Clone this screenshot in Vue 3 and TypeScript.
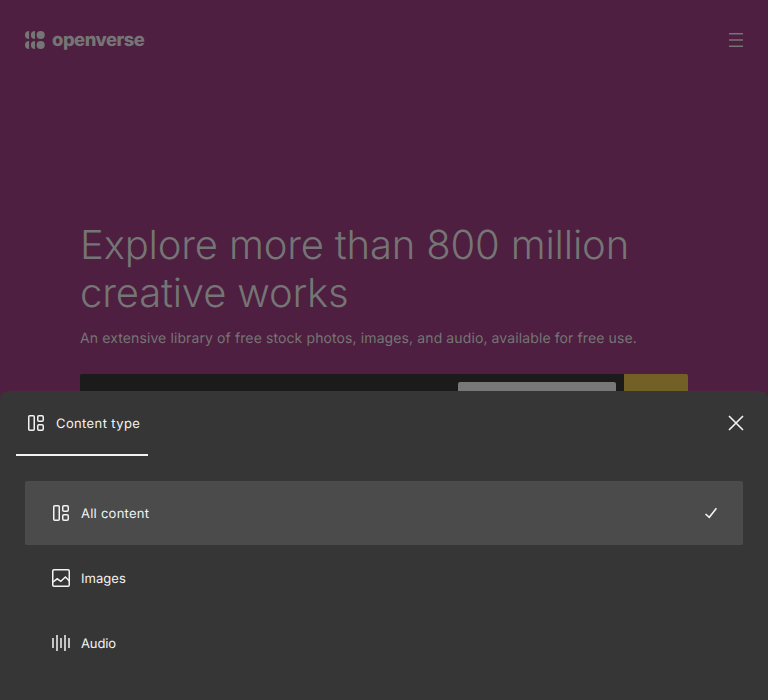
<script setup lang="ts">
import { ref } from 'vue'

type ContentType = 'all' | 'images' | 'audio'

const options: { id: ContentType; label: string }[] = [
  { id: 'all', label: 'All content' },
  { id: 'images', label: 'Images' },
  { id: 'audio', label: 'Audio' },
]
const selected = ref<ContentType>('all')
</script>

<template>
  <div class="page">
    <header class="header">
      <a class="brand">
        <svg class="mark" width="20" height="20" viewBox="0 0 20 20" fill="currentColor">
          <circle cx="15.7" cy="5" r="4.1" />
          <circle cx="15.7" cy="15" r="4.1" />
          <path d="M4.1 .9a4.1 4.1 0 0 0 0 8.2zM4.1 10.9a4.1 4.1 0 0 0 0 8.2zM10 .9a4.1 4.1 0 0 0 0 8.2zM10 10.9a4.1 4.1 0 0 0 0 8.2z" />
        </svg>
        <span class="wordmark">openverse</span>
      </a>
      <svg class="menu" width="14" height="14" viewBox="0 0 14 14" stroke="currentColor" stroke-width="1.5">
        <path d="M0 .75h14M0 7h14M0 13.25h14" />
      </svg>
    </header>

    <main class="hero">
      <h1 class="title">Explore more than 800 million creative works</h1>
      <p class="subtitle">An extensive library of free stock photos, images, and audio, available for free use.</p>
      <div class="search">
        <div class="field"><div class="type-button"></div></div>
        <div class="submit"></div>
      </div>
    </main>

    <section class="sheet">
      <div class="tabs">
        <button class="tab">
          <svg width="24" height="24" viewBox="0 0 24 24" fill="none" stroke="currentColor" stroke-width="1.5">
            <rect x="4.75" y="4.75" width="5.5" height="14.5" rx="1" />
            <rect x="13.75" y="4.75" width="5.5" height="5.5" rx="1.2" />
            <rect x="13.75" y="13.75" width="5.5" height="5.5" rx="1.2" />
          </svg>
          <span class="tab-label">Content type</span>
        </button>
        <button class="close" aria-label="Close">
          <svg width="16" height="16" viewBox="0 0 16 16" stroke="currentColor" stroke-width="1.6">
            <path d="M1 1l14 14M15 1L1 15" />
          </svg>
        </button>
      </div>
      <div class="options">
        <button
          v-for="option in options"
          :key="option.id"
          class="option"
          :class="[option.id, { selected: option.id === selected }]"
          @click="selected = option.id"
        >
          <svg v-if="option.id === 'all'" width="24" height="24" viewBox="0 0 24 24" fill="none" stroke="currentColor" stroke-width="1.5">
            <rect x="4.75" y="4.75" width="5.5" height="14.5" rx="1" />
            <rect x="13.75" y="4.75" width="5.5" height="5.5" rx="1.2" />
            <rect x="13.75" y="13.75" width="5.5" height="5.5" rx="1.2" />
          </svg>
          <svg v-else-if="option.id === 'images'" width="24" height="24" viewBox="0 0 24 24" fill="none" stroke="currentColor" stroke-width="1.5">
            <rect x="3.75" y="3.75" width="16.5" height="16.5" rx="1.2" />
            <path d="M4 16l4.2-3.2 3.6 2.5 4.6-4.3 4 4" />
          </svg>
          <svg v-else width="24" height="24" viewBox="0 0 24 24" fill="none" stroke="currentColor" stroke-width="1.5">
            <path d="M4 7v10M8 4v16M12 7v10M16 4v16M20 7v10" />
          </svg>
          <span class="label">{{ option.label }}</span>
          <svg v-if="option.id === selected" class="check" width="14" height="12" viewBox="0 0 14 12" fill="none" stroke="currentColor" stroke-width="1.6">
            <path d="M1.5 7l3.8 3.3L12.4 1.3" />
          </svg>
        </button>
      </div>
    </section>
  </div>
</template>

<style>
body {
  margin: 0;
}
</style>

<style scoped>
.page {
  position: relative;
  box-sizing: border-box;
  height: 700px;
  overflow: hidden;
  background: #4e1f40;
  color: #757575;
  font-family: Inter, "Liberation Sans", sans-serif;
  text-rendering: geometricPrecision;
}
.header {
  display: flex;
  align-items: center;
  justify-content: space-between;
  height: 80px;
  padding: 0 25px;
}
.brand {
  display: flex;
  align-items: center;
  gap: 7px;
}
.wordmark {
  font-size: 18.4px;
  line-height: 24px;
  font-weight: 800;
  letter-spacing: -0.5px;
  margin-top: -1px;
}
.mark,
.menu {
  display: block;
}
.hero {
  padding: 141px 80px 0;
}
.title {
  margin: 0;
  font-size: 40px;
  line-height: 48px;
  font-weight: 300;
  letter-spacing: -0.17px;
}
.subtitle {
  margin: 11px 0 0;
  font-size: 14px;
  line-height: 21px;
  letter-spacing: 0.11px;
}
.search {
  display: flex;
  height: 64px;
  margin-top: 25px;
  border-radius: 2px;
  overflow: hidden;
}
.field {
  display: flex;
  flex: 1;
  justify-content: flex-end;
  padding: 8px;
  background: #1b1b1b;
}
.type-button {
  width: 158px;
  border-radius: 2px;
  background: #787878;
}
.submit {
  width: 64px;
  background: #726027;
}
.sheet {
  position: absolute;
  left: 0;
  right: 0;
  bottom: 0;
  box-sizing: border-box;
  height: 309px;
  border-radius: 8px 8px 0 0;
  background: #363636;
  color: #f3f3f3;
}
button {
  border: 0;
  margin: 0;
  background: none;
  color: inherit;
  font: 13px/17px Inter, "Liberation Sans", sans-serif;
  text-rendering: inherit;
}
.tabs {
  display: flex;
  justify-content: space-between;
  height: 65px;
  padding: 0 16px;
}
.tab {
  display: flex;
  align-items: center;
  gap: 8px;
  box-sizing: border-box;
  width: 132px;
  padding: 0 0 0 8px;
  border-bottom: 2px solid #f3f3f3;
  white-space: nowrap;
}
.tab-label {
  padding-top: 3px;
  letter-spacing: 0.38px;
}
.close {
  display: grid;
  place-items: center;
  width: 32px;
  height: 64px;
  padding: 0;
}
.options {
  display: flex;
  flex-direction: column;
  gap: 1px;
  padding: 25px 25px 0;
}
.option {
  display: flex;
  align-items: center;
  gap: 8px;
  height: 64px;
  padding: 0 24px;
  border-radius: 2px;
  text-align: left;
}
.option.selected {
  background: #4b4b4b;
}
.option.all {
  letter-spacing: 0.25px;
}
.option.images {
  letter-spacing: 0.05px;
}
.option.audio {
  letter-spacing: -0.1px;
}
.label {
  flex: 1;
  padding-top: 2px;
}
.check {
  margin-right: 1px;
}
</style>
